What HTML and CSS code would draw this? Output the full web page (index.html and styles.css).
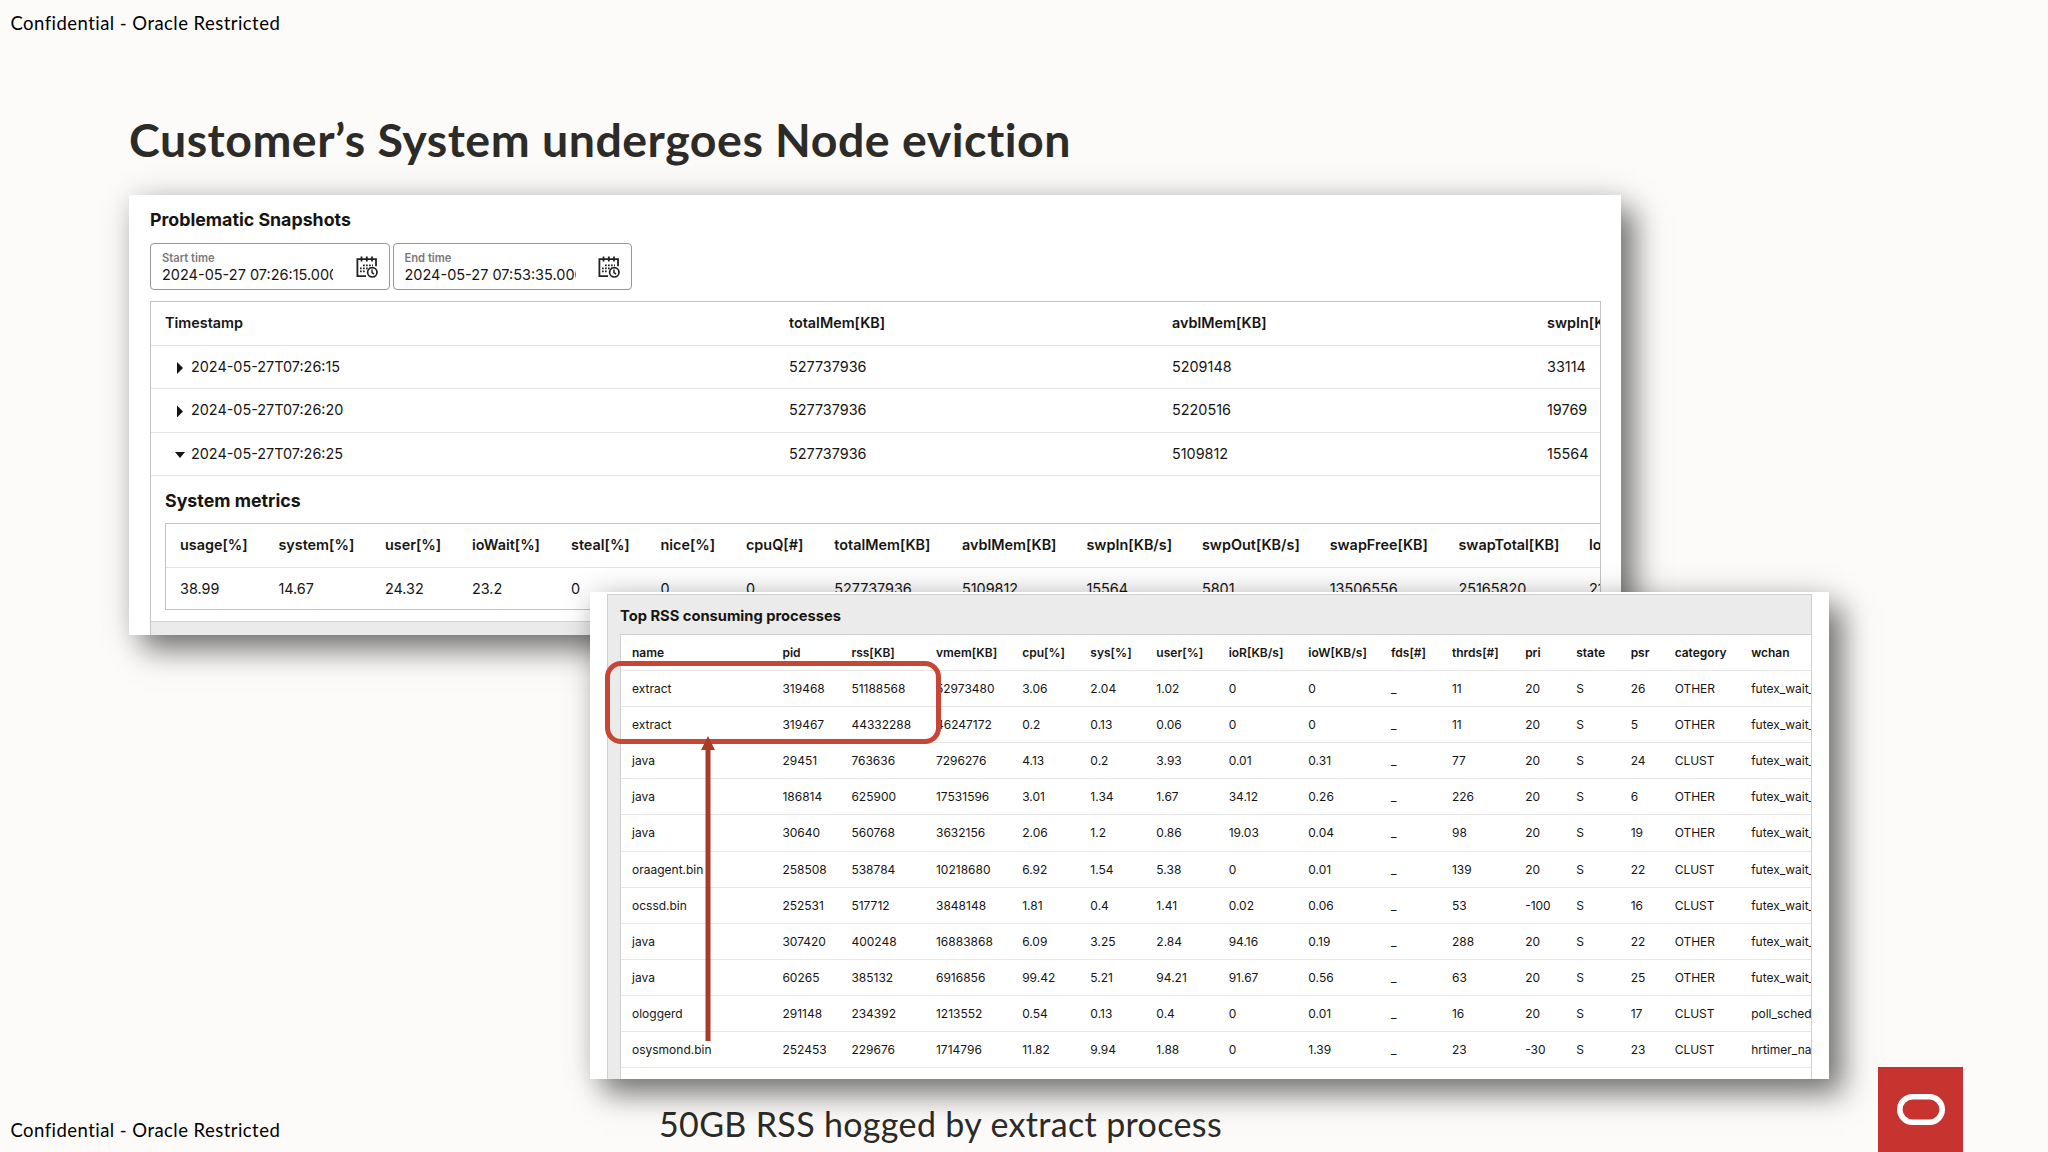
FILE: index.html
```html
<!DOCTYPE html>
<html lang="en">
<head>
    <meta charset="UTF-8">
    <meta name="viewport" content="width=device-width, initial-scale=1.0">
    <title>Customer's System undergoes Node eviction</title>
    <link rel="stylesheet" href="styles.css">
</head>
<body>
    <div class="slide">
        <div class="label label-top">Confidential - Oracle Restricted</div>
        <h1><span>Customer’s System undergoes Node eviction</span></h1>

        <div class="panel snapshots">
            <h2>Problematic Snapshots</h2>
            <div class="fields">
                <div class="field">
                    <div class="field-text">
                        <span class="field-label">Start time</span>
                        <span class="field-value">2024-05-27 07:26:15.000</span>
                    </div>
                    <svg class="calendar" viewBox="0 0 22 22" fill="none" stroke="#222">
                        <path d="M10 20.2H1.4V3.2H20v7" stroke-width="1.8"/>
                        <path d="M5.5 .5v5M10.8 .5v5M16 .5v5" stroke-width="1.8"/>
                        <path d="M7 9.3h10M4 12.3h10M4 15.3h6" stroke-width="1.7" stroke-dasharray="1.7 1.3"/>
                        <circle cx="16.3" cy="16.3" r="4.7" stroke-width="1.7"/>
                        <path d="M16 13.6v3l2 1.6" stroke-width="1.5"/>
                    </svg>
                </div>
                <div class="field">
                    <div class="field-text">
                        <span class="field-label">End time</span>
                        <span class="field-value">2024-05-27 07:53:35.000</span>
                    </div>
                    <svg class="calendar" viewBox="0 0 22 22" fill="none" stroke="#222">
                        <path d="M10 20.2H1.4V3.2H20v7" stroke-width="1.8"/>
                        <path d="M5.5 .5v5M10.8 .5v5M16 .5v5" stroke-width="1.8"/>
                        <path d="M7 9.3h10M4 12.3h10M4 15.3h6" stroke-width="1.7" stroke-dasharray="1.7 1.3"/>
                        <circle cx="16.3" cy="16.3" r="4.7" stroke-width="1.7"/>
                        <path d="M16 13.6v3l2 1.6" stroke-width="1.5"/>
                    </svg>
                </div>
            </div>

            <div class="snapshot-box">
                <div class="snap-row head"><span>Timestamp</span><span>totalMem[KB]</span><span>avblMem[KB]</span><span>swpIn[KB/s]</span></div>
                <div class="snap-row"><span class="time"><i class="caret"></i>2024-05-27T07:26:15</span><span>527737936</span><span>5209148</span><span>33114</span></div>
                <div class="snap-row"><span class="time"><i class="caret"></i>2024-05-27T07:26:20</span><span>527737936</span><span>5220516</span><span>19769</span></div>
                <div class="snap-row"><span class="time"><i class="caret open"></i>2024-05-27T07:26:25</span><span>527737936</span><span>5109812</span><span>15564</span></div>
                <div class="metrics">
                    <h3>System metrics</h3>
                    <div class="metrics-table">
                        <div class="metric-row head"><span>usage[%]</span><span>system[%]</span><span>user[%]</span><span>ioWait[%]</span><span>steal[%]</span><span>nice[%]</span><span>cpuQ[#]</span><span>totalMem[KB]</span><span>avblMem[KB]</span><span>swpIn[KB/s]</span><span>swpOut[KB/s]</span><span>swapFree[KB]</span><span>swapTotal[KB]</span><span>load1</span></div>
                        <div class="metric-row"><span>38.99</span><span>14.67</span><span>24.32</span><span>23.2</span><span>0</span><span>0</span><span>0</span><span>527737936</span><span>5109812</span><span>15564</span><span>5801</span><span>13506556</span><span>25165820</span><span>21.5</span></div>
                    </div>
                </div>
                <div class="gray-strip"></div>
            </div>
        </div>

        <div class="panel processes">
            <div class="process-box">
                <h4>Top RSS consuming processes</h4>
                <div class="process-table">
                    <div class="proc-row head"><span>name</span><span>pid</span><span>rss[KB]</span><span>vmem[KB]</span><span>cpu[%]</span><span>sys[%]</span><span>user[%]</span><span>ioR[KB/s]</span><span>ioW[KB/s]</span><span>fds[#]</span><span>thrds[#]</span><span>pri</span><span>state</span><span>psr</span><span>category</span><span>wchan</span></div>
                    <div class="proc-row"><span>extract</span><span>319468</span><span>51188568</span><span>52973480</span><span>3.06</span><span>2.04</span><span>1.02</span><span>0</span><span>0</span><span>_</span><span>11</span><span>20</span><span>S</span><span>26</span><span>OTHER</span><span>futex_wait_</span></div>
                    <div class="proc-row"><span>extract</span><span>319467</span><span>44332288</span><span>46247172</span><span>0.2</span><span>0.13</span><span>0.06</span><span>0</span><span>0</span><span>_</span><span>11</span><span>20</span><span>S</span><span>5</span><span>OTHER</span><span>futex_wait_</span></div>
                    <div class="proc-row"><span>java</span><span>29451</span><span>763636</span><span>7296276</span><span>4.13</span><span>0.2</span><span>3.93</span><span>0.01</span><span>0.31</span><span>_</span><span>77</span><span>20</span><span>S</span><span>24</span><span>CLUST</span><span>futex_wait_</span></div>
                    <div class="proc-row"><span>java</span><span>186814</span><span>625900</span><span>17531596</span><span>3.01</span><span>1.34</span><span>1.67</span><span>34.12</span><span>0.26</span><span>_</span><span>226</span><span>20</span><span>S</span><span>6</span><span>OTHER</span><span>futex_wait_</span></div>
                    <div class="proc-row"><span>java</span><span>30640</span><span>560768</span><span>3632156</span><span>2.06</span><span>1.2</span><span>0.86</span><span>19.03</span><span>0.04</span><span>_</span><span>98</span><span>20</span><span>S</span><span>19</span><span>OTHER</span><span>futex_wait_</span></div>
                    <div class="proc-row"><span>oraagent.bin</span><span>258508</span><span>538784</span><span>10218680</span><span>6.92</span><span>1.54</span><span>5.38</span><span>0</span><span>0.01</span><span>_</span><span>139</span><span>20</span><span>S</span><span>22</span><span>CLUST</span><span>futex_wait_</span></div>
                    <div class="proc-row"><span>ocssd.bin</span><span>252531</span><span>517712</span><span>3848148</span><span>1.81</span><span>0.4</span><span>1.41</span><span>0.02</span><span>0.06</span><span>_</span><span>53</span><span>-100</span><span>S</span><span>16</span><span>CLUST</span><span>futex_wait_</span></div>
                    <div class="proc-row"><span>java</span><span>307420</span><span>400248</span><span>16883868</span><span>6.09</span><span>3.25</span><span>2.84</span><span>94.16</span><span>0.19</span><span>_</span><span>288</span><span>20</span><span>S</span><span>22</span><span>OTHER</span><span>futex_wait_</span></div>
                    <div class="proc-row"><span>java</span><span>60265</span><span>385132</span><span>6916856</span><span>99.42</span><span>5.21</span><span>94.21</span><span>91.67</span><span>0.56</span><span>_</span><span>63</span><span>20</span><span>S</span><span>25</span><span>OTHER</span><span>futex_wait_</span></div>
                    <div class="proc-row"><span>ologgerd</span><span>291148</span><span>234392</span><span>1213552</span><span>0.54</span><span>0.13</span><span>0.4</span><span>0</span><span>0.01</span><span>_</span><span>16</span><span>20</span><span>S</span><span>17</span><span>CLUST</span><span>poll_sched</span></div>
                    <div class="proc-row"><span>osysmond.bin</span><span>252453</span><span>229676</span><span>1714796</span><span>11.82</span><span>9.94</span><span>1.88</span><span>0</span><span>1.39</span><span>_</span><span>23</span><span>-30</span><span>S</span><span>23</span><span>CLUST</span><span>hrtimer_na</span></div>
                </div>
            </div>
            <div class="highlight"></div>
            <svg class="arrow" viewBox="0 0 14 305">
                <path d="M7 0L14 14H9.5V305H4.5V14H0z" fill="#a93b29"/>
            </svg>
        </div>

        <div class="footer">
            <div class="label">Confidential - Oracle Restricted</div>
            <p class="caption"><span>50GB RSS hogged by extract process</span></p>
            <div class="logo">
                <svg viewBox="0 0 48 31"><rect x="2.8" y="2.8" width="42.4" height="25.4" rx="12.7" fill="none" stroke="#fff" stroke-width="5.6"/></svg>
            </div>
        </div>
    </div>
</body>
</html>
```
FILE: styles.css
```css
* {
    box-sizing: border-box;
}
body {
    margin: 0;
    background-color: #fcfbf9;
    font-family: 'Inter', sans-serif;
    color: #161513;
}
.slide {
    position: relative;
    width: 2048px;
    height: 1152px;
    overflow: hidden;
    display: flex;
    flex-direction: column;
}
.label {
    padding-left: 10.5px;
    font-family: 'Lato', sans-serif;
    font-size: 18.5px;
    letter-spacing: 0.45px;
    line-height: 24px;
    color: #000;
    white-space: nowrap;
}
.label-top {
    padding-top: 11px;
}
h1 {
    margin: 68px 0 0 129px;
    height: 92px;
    font-family: 'Lato', sans-serif;
    font-size: 46.5px;
    letter-spacing: 0.5px;
    line-height: 72px;
    color: #2c2b27;
    white-space: nowrap;
}
h2, h3, h4 {
    margin: 0;
    font-weight: 650;
}
.panel {
    background-color: #fff;
    box-shadow: 14px 15px 28px rgba(0, 0, 0, 0.5), 0 0 30px rgba(0, 0, 0, 0.13);
}

/* snapshots panel */
.snapshots {
    width: 1492px;
    height: 440px;
    margin-left: 129px;
    padding: 13px 20px 0 21px;
    overflow: hidden;
    font-size: 14.4px;
}
h2 {
    font-size: 17.8px;
    line-height: 24px;
}
.fields {
    display: flex;
    gap: 3px;
    margin-top: 11px;
}
.field {
    display: flex;
    justify-content: space-between;
    width: 239.5px;
    height: 47px;
    padding: 7px 11px 0;
    border: 1px solid #98979a;
    border-radius: 4px;
}
.field-text {
    width: 171px;
    overflow: hidden;
    white-space: nowrap;
}
.field-label {
    display: block;
    font-size: 11.2px;
    font-weight: 600;
    line-height: 14px;
    color: #7a7977;
}
.field-value {
    display: block;
    font-size: 14.5px;
    line-height: 19px;
}
.calendar {
    width: 22px;
    height: 22px;
    margin-top: 5px;
}
.snapshot-box {
    height: 334px;
    margin-top: 11px;
    border: 1px solid #c4c4c4;
    border-bottom: none;
    overflow: hidden;
}
.snap-row {
    display: grid;
    grid-template-columns: 624px 383px 375px 100px;
    height: 43.6px;
    padding-left: 14px;
    line-height: 42px;
    border-bottom: 1px solid #e3e3e3;
    white-space: nowrap;
}
.head {
    font-weight: 600;
}
.time {
    display: flex;
    align-items: center;
    padding-left: 12px;
}
.caret {
    width: 14px;
    height: 12px;
    margin-top: 2px;
}
.caret::before {
    content: "";
    display: block;
    width: 6px;
    height: 12px;
    background-color: #161513;
    clip-path: polygon(0 0, 100% 50%, 0 100%);
}
.caret.open::before {
    width: 10px;
    height: 6px;
    margin: 3px 0 0 -2px;
    clip-path: polygon(0 0, 100% 0, 50% 100%);
}
.metrics {
    height: 145px;
    padding: 13px 0 0 14px;
}
h3 {
    font-size: 17.8px;
    line-height: 24px;
}
.metrics-table {
    width: 1700px;
    height: 87px;
    margin-top: 10px;
    border: 1px solid #c4c4c4;
}
.metric-row {
    display: grid;
    grid-template-columns: 98.4px 106.6px 87px 99px 89.5px 85.5px 88.3px 127.7px 124.5px 115.5px 127.7px 128.8px 130.5px 60px;
    height: 43.5px;
    padding-left: 14px;
    line-height: 42px;
    white-space: nowrap;
}
.metric-row.head {
    border-bottom: 1px solid #e3e3e3;
}
.gray-strip {
    height: 20px;
    background-color: #ebebeb;
    border-top: 1px solid #d4d4d4;
}

/* processes panel, lies over the snapshots one */
.processes {
    position: absolute;
    left: 590px;
    top: 592px;
    width: 1239px;
    height: 487px;
    padding: 2px 17px 0;
    font-size: 12px;
}
.process-box {
    height: 485px;
    padding-left: 12px;
    background-color: #ebebeb;
    border: 1px solid #cfcfcf;
    border-bottom: none;
    overflow: hidden;
}
h4 {
    height: 39px;
    font-size: 14.7px;
    line-height: 42px;
}
.process-table {
    height: 446px;
    background-color: #fff;
    border: 1px solid #cfcfcf;
    border-right: none;
    border-bottom: none;
    overflow: hidden;
}
.proc-row {
    display: grid;
    grid-template-columns: 150.4px 69px 84.6px 86.2px 68.2px 66px 72.3px 79.7px 82.6px 61px 73.2px 51px 54.5px 44px 76.5px 100px;
    height: 36.1px;
    padding-left: 11px;
    line-height: 35px;
    border-bottom: 1px solid #e6e6e6;
    white-space: nowrap;
}
.highlight {
    position: absolute;
    left: 15px;
    top: 69px;
    width: 336px;
    height: 83px;
    border: 5px solid #c74634;
    border-radius: 16px;
}
.arrow {
    position: absolute;
    left: 111px;
    top: 144px;
    width: 14px;
    height: 305px;
}

.footer {
    display: flex;
    align-items: flex-end;
    height: 85px;
    margin-top: auto;
}
.footer .label {
    width: 659px;
    padding-bottom: 10px;
}
.caption {
    width: 1219px;
    margin: 0;
    font-family: 'Lato', sans-serif;
    font-size: 34px;
    letter-spacing: 0.35px;
    line-height: 57px;
    color: #2c2b27;
    white-space: nowrap;
}
.logo {
    width: 85px;
    height: 85px;
    padding: 27px 0 0 19px;
    background-color: #c73430;
}
.logo svg {
    display: block;
    width: 48px;
    height: 31px;
}
```
